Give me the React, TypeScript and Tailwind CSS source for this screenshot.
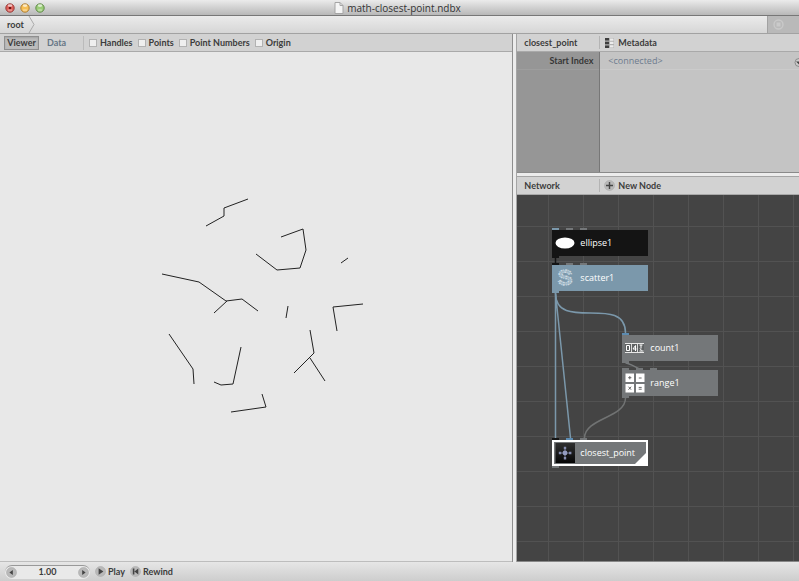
import { ReactNode, useState } from "react";

const viewOptions = ["Handles", "Points", "Point Numbers", "Origin"];

const segments = [
  "206,174 224,164 224,156 248,147",
  "281,185 303,177 306,198 300,216 277,218 256,202",
  "348,206 341,211",
  "162,222 199,230 226,249 242,247 258,259",
  "227,249 214,261",
  "288,254 286,266",
  "363,252 333,255 337,279",
  "310,278 314,301 309,306 294,321",
  "310,306 325,329",
  "169,282 193,317 194,332",
  "214,330 221,333 233,332 241,295",
  "262,342 266,355 231,360",
];

const headerBar =
  "flex h-[18px] shrink-0 items-center border-b border-[#a9a9a9] bg-[#d2d2d2] font-['Lato',sans-serif] text-[9px] font-bold text-[#3c3c3c]";

function ScatterIcon() {
  return (
    <svg className="size-5 overflow-visible" viewBox="0 0 20 20" aria-hidden="true">
      <text
        x="10"
        y="17"
        textAnchor="middle"
        fontFamily="Liberation Sans"
        fontSize="22"
        fontWeight="bold"
        fill="#9db5c4"
        stroke="#cbd9e2"
        strokeWidth="1.4"
        strokeDasharray="1.8 0.9 0.7 1.1"
      >
        S
      </text>
    </svg>
  );
}

function EllipseIcon() {
  return (
    <svg className="size-5" viewBox="0 0 20 20" aria-hidden="true">
      <ellipse cx="10" cy="10" rx="9.5" ry="5.5" fill="#fff" />
    </svg>
  );
}

function CountIcon() {
  return (
    <svg className="size-5" viewBox="0 0 20 20" aria-hidden="true">
      <path d="M0 5.5h19M0 14.5h19" stroke="#e8e8e8" strokeWidth="1" />
      <path d="M0 6h19v8h-19z" fill="#5f6263" />
      <path d="M6.5 6v8M12.5 6v8" stroke="#dadada" strokeWidth="1" />
      <path
        d="M1.5 7.5h3v5h-3zM10.5 13v-5.5l-2.5 3.5h3.5M14.5 7h3M16 7v3.5M14.5 13h4M15 10.5l1.5 2"
        fill="none"
        stroke="#fff"
        strokeWidth="1"
      />
    </svg>
  );
}

function RangeIcon() {
  return (
    <svg className="size-5" viewBox="0 0 20 20" aria-hidden="true">
      <path d="M0.5 0.5h8.5v8.5h-8.5zM11 0.5h8.5v8.5h-8.5zM0.5 11h8.5v8.5h-8.5zM11 11h8.5v8.5h-8.5z" fill="#fff" />
      <path
        d="M3.2 4.7h3.2M4.8 3.1v3.2M13.8 5h2.8M3.5 13.7l2.6 3M6.1 13.7l-2.6 3M13.7 14.4h3M13.7 16.2h3"
        stroke="#666"
        strokeWidth="1"
      />
    </svg>
  );
}

function PointIcon() {
  return (
    <svg className="size-5" viewBox="0 0 20 20" aria-hidden="true">
      <defs>
        <linearGradient id="pointBg" x1="0" y1="0" x2="0" y2="1">
          <stop offset="0" stopColor="#303030" />
          <stop offset="1" stopColor="#050505" />
        </linearGradient>
      </defs>
      <rect x="0.5" width="19.5" height="20" fill="url(#pointBg)" />
      <path d="M10 5v10M5 10h10" stroke="#6f7591" strokeWidth="1" />
      <circle cx="10" cy="10" r="2.4" fill="#949cc0" />
      <path d="M8.8 3.8h2.4v2.4h-2.4zM8.8 14h2.4v2.4h-2.4zM3.8 8.8h2.4v2.4h-2.4zM14 8.8h2.4v2.4h-2.4z" fill="#858cae" />
    </svg>
  );
}

interface NodeProps {
  label: string;
  place: string;
  color: string;
  ports?: string[];
  output: string;
  selected?: boolean;
  children: ReactNode;
}

function Node({ label, place, color, ports = [], output, selected, children }: NodeProps) {
  return (
    <div className={`absolute h-[26px] w-24 ${place}`}>
      <div className="absolute -top-0.5 left-0 flex gap-[7px]">
        {ports.map((port, i) => (
          <span key={i} className={`h-0.5 w-[7px] ${port}`} />
        ))}
      </div>
      <div className={`relative flex h-full items-center gap-[5px] pl-[3px] text-[9px] text-white ${color}`}>
        {children}
        <span className="pb-px">{label}</span>
        {selected && (
          <>
            <span className="absolute inset-0 border-2 border-white" />
            <svg className="absolute right-0 bottom-0 size-[15px]" viewBox="0 0 15 15" aria-hidden="true">
              <path d="M15 0v15H0z" fill="#fff" />
            </svg>
          </>
        )}
      </div>
      <span className={`absolute top-full left-0 h-0.5 w-[7px] ${output}`} />
    </div>
  );
}

function RoundIcon({ path }: { path: string }) {
  return (
    <svg className="size-[11px] shrink-0" viewBox="0 0 11 11" aria-hidden="true">
      <circle cx="5.5" cy="5.5" r="5" fill="#b9b9b9" stroke="#acacac" strokeWidth="0.6" />
      <path d={path} fill="#444" />
    </svg>
  );
}

function TitleBar() {
  const lights = [
    { name: "Close", rim: "#8f3330", fill: "#e0605a" },
    { name: "Minimize", rim: "#a87528", fill: "#f6bf56" },
    { name: "Zoom", rim: "#56813f", fill: "#9bcd77" },
  ];
  return (
    <header className="relative flex h-4 shrink-0 items-center justify-center border-b border-[#777] bg-linear-to-b from-[#ebebeb] to-[#b8b8b8]">
      <div className="absolute inset-y-0 left-[5px] flex items-center gap-[5px]">
        {lights.map((light) => (
          <button key={light.name} aria-label={light.name}>
            <svg className="size-2.5" viewBox="0 0 10 10" aria-hidden="true">
              <circle cx="5" cy="5" r="4.2" fill={light.fill} stroke={light.rim} strokeWidth="0.9" />
              <ellipse cx="5" cy="2.6" rx="2.3" ry="1.3" fill="#fff" fillOpacity="0.65" />
              <ellipse cx="5" cy="7.3" rx="2.4" ry="1.2" fill="#fff" fillOpacity="0.3" />
              {light.name === "Close" && <circle cx="5" cy="5" r="1.3" fill="#6d1512" />}
            </svg>
          </button>
        ))}
      </div>
      <h1 className="flex items-center gap-[3px] pr-1 text-[10px] leading-none text-[#333]">
        <svg className="h-3 w-2.5" viewBox="0 0 10 12" aria-hidden="true">
          <path d="M1 0.5h5l3 3v8h-8z" fill="#f5f5f5" stroke="#a5a5a5" />
          <path d="M6 0.5v3h3" fill="none" stroke="#a5a5a5" />
        </svg>
        math-closest-point.ndbx
      </h1>
    </header>
  );
}

function ViewerPane() {
  const [tab, setTab] = useState("Viewer");
  return (
    <section className="flex min-w-0 flex-[513] flex-col border-r border-[#8e8e8e]">
      <div className={`${headerBar} pl-1`}>
        {["Viewer", "Data"].map((name) => (
          <button
            key={name}
            onClick={() => setTab(name)}
            className={
              name === tab
                ? "h-3.5 w-[35px] border border-[#8f8f8f] bg-[#bcbcbc] leading-none shadow-[inset_0_1px_2px_#a5a5a5]"
                : "h-3.5 w-[35px] leading-none text-[#667686]"
            }
          >
            {name}
          </button>
        ))}
        <div className="ml-[9px] flex h-3.5 items-center gap-[5px] border-l border-[#bbb] pl-[5px]">
          {viewOptions.map((option) => (
            <label key={option} className="flex items-center gap-[3px] whitespace-nowrap">
              <input
                type="checkbox"
                className="size-2 appearance-none border border-[#b2b2b2] bg-[#efefef] checked:bg-[#667686]"
              />
              {option}
            </label>
          ))}
        </div>
      </div>
      <div className="min-h-0 flex-1 border-b border-[#bdbdbd] bg-[#e8e8e8]">
        <svg className="size-full" role="img" aria-label="Viewer canvas">
          {segments.map((points) => (
            <polyline key={points} points={points} fill="none" stroke="#222" strokeWidth="1" />
          ))}
        </svg>
      </div>
    </section>
  );
}

function ParametersPane() {
  return (
    <section>
      <div className={headerBar}>
        <h2 className="w-[83px] border-r border-[#b4b4b4] pl-[7px]">closest_point</h2>
        <button className="flex items-center gap-1 pl-[5px]">
          <svg className="h-2.5 w-[9px]" viewBox="0 0 9 10" aria-hidden="true">
            <rect width="9" height="10" fill="#b2b2b2" />
            <path d="M0 0h4v2.6h-4zM0 3.7h4v2.6h-4zM0 7.4h4v2.6h-4z" fill="#3d3d3d" />
            <path d="M5 0.5h3.5v2.2h-3.5zM5 3.7h3.5v2.4h-3.5zM5 7.2h3.5v2.2h-3.5z" fill="#ececec" />
          </svg>
          Metadata
        </button>
      </div>
      <div className="flex h-[121px] border-b border-[#8a8a8a] text-[9px]">
        <div className="w-[83px] shrink-0 border-r border-[#777] bg-[#969696]">
          <div className="flex h-[18px] items-center justify-end border-b border-[#9e9e9e] pr-1.5 font-['Lato',sans-serif] font-bold text-[#363636]">
            Start Index
          </div>
        </div>
        <div className="min-w-0 flex-1 bg-[#c4c4c4]">
          <div className="flex h-[18px] items-center justify-between border-b border-[#cbcbcb] pl-2 text-[#6d7b8d]">
            &lt;connected&gt;
            <button aria-label="Parameter menu" className="pt-1">
              <svg className="h-[9px] w-[5px]" viewBox="0 0 5 9" aria-hidden="true">
                <circle cx="5" cy="4.5" r="4" fill="#ccc" stroke="#8a8a8a" />
                <path d="M2 3.5h6l-3 3z" fill="#444" />
              </svg>
            </button>
          </div>
        </div>
      </div>
    </section>
  );
}

function NetworkPane() {
  const gray = "bg-[#747779]";
  const blue = "bg-[#7b98ab]";
  const black = "bg-[#141414]";
  return (
    <section className="flex min-h-0 flex-1 flex-col">
      <div className={headerBar}>
        <h2 className="w-[83px] border-r border-[#b4b4b4] pl-[7px]">Network</h2>
        <button className="flex items-center gap-[3px] pl-1">
          <RoundIcon path="M4.8 2h1.4v2.8H9v1.4H6.2V9H4.8V6.2H2V4.8h2.8z" />
          New Node
        </button>
      </div>
      <div className="relative min-h-0 flex-1 overflow-hidden border-b border-[#888] bg-[#444]">
        <svg className="absolute inset-0 size-full" aria-hidden="true">
          <defs>
            <pattern id="grid" x="31" y="31" width="35" height="35" patternUnits="userSpaceOnUse">
              <path d="M0.5 0v35M0 0.5h35" stroke="#525252" />
            </pattern>
          </defs>
          <rect width="100%" height="100%" fill="url(#grid)" />
          <g fill="none" strokeWidth="1.5">
            <path d="M38.5 63v6" stroke="#141414" />
            <path d="M38.5 98V243M38.5 98L53.5 243" stroke="#7b98ab" />
            <path d="M38.5 98C38.5 138 108.5 98 108.5 138" stroke="#7b98ab" />
            <path d="M108.5 168C112 168 120 173 123 174" stroke="#787b7d" />
            <path d="M108.5 203C108.5 223 67.5 223 67.5 243" stroke="#717373" />
          </g>
        </svg>
        <Node label="ellipse1" place="top-[35px] left-[35px]" color={black} ports={[blue, gray, gray]} output={black}>
          <EllipseIcon />
        </Node>
        <Node label="scatter1" place="top-[70px] left-[35px]" color={blue} ports={[black, gray, gray]} output={blue}>
          <ScatterIcon />
        </Node>
        <Node label="count1" place="top-[140px] left-[105px]" color={gray} ports={["bg-[#5c8bb0]"]} output={gray}>
          <CountIcon />
        </Node>
        <Node label="range1" place="top-[175px] left-[105px]" color={gray} ports={[gray, gray, gray]} output={gray}>
          <RangeIcon />
        </Node>
        <Node
          label="closest_point"
          place="top-[245px] left-[35px]"
          color={gray}
          ports={[black, "bg-[#5c8bb0]", gray]}
          output={gray}
          selected
        >
          <PointIcon />
        </Node>
      </div>
    </section>
  );
}

function AnimationBar() {
  const [frame, setFrame] = useState(1);
  return (
    <footer className="flex h-[19px] shrink-0 items-center gap-[5px] bg-linear-to-b from-[#e6e6e6] to-[#cdcdcd] pl-[5px] font-['Lato',sans-serif] text-[9px] font-bold text-[#3c3c3c]">
      <div className="flex h-3.5 w-[85px] items-center justify-between rounded-full border-t border-[#999] bg-[#e9e9e9] px-px">
        <button aria-label="Previous frame" onClick={() => setFrame(frame - 1)}>
          <RoundIcon path="M6.8 3v5L3.4 5.5z" />
        </button>
        <input
          aria-label="Frame"
          className="w-12 bg-transparent text-center"
          value={frame.toFixed(2)}
          onChange={(e) => setFrame(Number(e.target.value) || 1)}
        />
        <button aria-label="Next frame" onClick={() => setFrame(frame + 1)}>
          <RoundIcon path="M4.2 3v5l3.4-2.5z" />
        </button>
      </div>
      <button className="flex items-center gap-0.5">
        <RoundIcon path="M3.6 2.2v6.6l4.8-3.3z" />
        Play
      </button>
      <button className="flex items-center gap-0.5" onClick={() => setFrame(1)}>
        <RoundIcon path="M2.8 2.5h1.6v6H2.8zM8.3 2.5v6L4.4 5.5z" />
        Rewind
      </button>
    </footer>
  );
}

export default function App() {
  return (
    <div className="flex h-screen flex-col overflow-hidden bg-[#e8e8e8] font-['Open_Sans',sans-serif]">
      <TitleBar />
      <nav className="flex h-[18px] shrink-0 border-b border-[#a2a2a2] bg-linear-to-b from-[#ebebeb] to-[#d6d6d6] font-['Lato',sans-serif] text-[9px] font-bold text-[#3c3c3c]">
        <a href="#root" className="flex items-center pl-[7px]">
          root
        </a>
        <svg className="ml-[3px] h-full w-2" viewBox="0 0 8 17" aria-hidden="true">
          <path d="M2 0l5 8.5L2 17" fill="none" stroke="#aaa" />
        </svg>
        <button
          aria-label="Stop"
          className="ml-auto flex w-8 items-center border-l border-[#a2a2a2] bg-[#b9b9b9] pl-[5px]"
        >
          <svg className="size-[11px]" viewBox="0 0 11 11" aria-hidden="true">
            <circle cx="5.5" cy="5.5" r="4.5" fill="#b9b9b9" stroke="#c9c9c9" strokeWidth="1.4" />
            <rect x="3.5" y="3.5" width="4" height="4" fill="#cacaca" />
          </svg>
        </button>
      </nav>
      <main className="flex min-h-0 flex-1">
        <ViewerPane />
        <div className="w-1 shrink-0 border-r border-[#a5a5a5] bg-[#ececec]" />
        <div className="flex min-w-0 flex-[282] flex-col">
          <ParametersPane />
          <div className="h-1 shrink-0 border-b border-[#a5a5a5] bg-[#ececec]" />
          <NetworkPane />
        </div>
      </main>
      <AnimationBar />
    </div>
  );
}
